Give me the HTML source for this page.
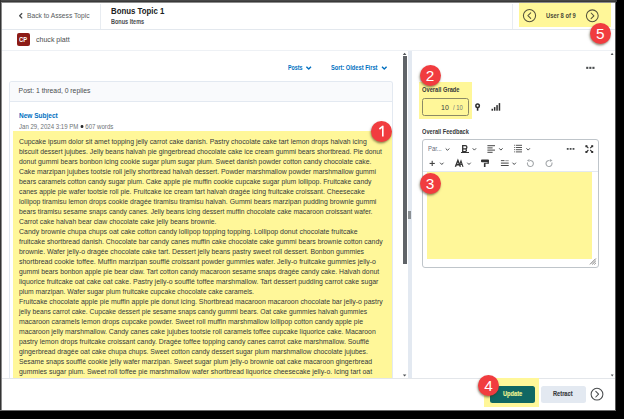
<!DOCTYPE html>
<html><head><meta charset="utf-8">
<style>
*{margin:0;padding:0;box-sizing:border-box}
html,body{width:624px;height:419px;overflow:hidden;background:#000}
body{position:relative;font-family:"Liberation Sans",sans-serif;color:#494c4e}
.a{position:absolute;display:block}
.t{position:absolute;white-space:nowrap;line-height:1}
#win{position:absolute;left:0;top:0;width:615px;height:410px;background:#fff;overflow:hidden}
#topband{position:absolute;left:0;top:0;width:617px;height:2.8px;background:#3c3c3c}
#leftb{position:absolute;left:0;top:0;width:1.1px;height:410px;background:#3c3c3c}
.badge{position:absolute;width:21px;height:21px;border-radius:50%;background:#f13c3f;box-shadow:-0.6px 1.4px 2.2px rgba(60,50,20,.55)}
#body{position:absolute;left:19px;top:0;font-size:7.2px;color:#35383a}
#body div{position:absolute;left:0;white-space:nowrap;line-height:1;transform-origin:0 0}
</style></head><body>
<div id="win">
<div class="a" style="left:100px;top:4px;width:1px;height:25px;background:#e8ecf1;"></div>
<div class="a" style="left:512px;top:4px;width:1px;height:25px;background:#e8ecf1;"></div>
<div class="a" style="left:0px;top:28.6px;width:615px;height:1px;background:#e3e8ee;"></div>
<svg class="a" style="left:19px;top:12px;overflow:visible;" width="5" height="8" viewBox="0 0 5 8"><g transform="translate(0.0 0.6)"><path d="M3.15 0.65 L0.65 3.2 L3.15 5.75" fill="none" stroke="#494c4e" stroke-width="1.3" stroke-linecap="butt" stroke-linejoin="round"/></g></svg>
<div class="t" id="back" style="left:27px;top:11.6px;font-size:7.5px;color:#565a5c;transform:scaleX(0.89);transform-origin:0 0;">Back to Assess Topic</div>
<div class="t" id="title" style="left:111px;top:6.3px;font-size:9.4px;color:#202122;font-weight:bold;transform:scaleX(0.835);transform-origin:0 0;">Bonus Topic 1</div>
<div class="t" id="sub" style="left:111px;top:18.6px;font-size:6.4px;color:#494c4e;font-weight:bold;transform:scaleX(0.865);transform-origin:0 0;">Bonus Items</div>
<div class="a" style="left:518.8px;top:2.7px;width:92.5px;height:24.2px;background:#fff799;"></div>
<svg class="a" style="left:521px;top:8px;overflow:visible;" width="18" height="17" viewBox="0 0 18 17"><g transform="translate(0.9 0.0)"><circle cx="7.6" cy="7.6" r="6.1" fill="none" stroke="#55523c" stroke-width="1.05"/><path d="M8.799999999999999 4.8 L6.0 7.6 L8.799999999999999 10.399999999999999" fill="none" stroke="#55523c" stroke-width="1.05" stroke-linecap="round" stroke-linejoin="round"/></g></svg>
<svg class="a" style="left:584px;top:8px;overflow:visible;" width="17" height="17" viewBox="0 0 17 17"><g transform="translate(0.9 0.4)"><circle cx="7.4" cy="7.4" r="5.9" fill="none" stroke="#55523c" stroke-width="1.05"/><path d="M6.2 4.6000000000000005 L9.0 7.4 L6.2 10.2" fill="none" stroke="#55523c" stroke-width="1.05" stroke-linecap="round" stroke-linejoin="round"/></g></svg>
<div class="t" id="user" style="left:546.2px;top:12.8px;font-size:6.4px;color:#4a4a38;font-weight:bold;transform:scaleX(0.91);transform-origin:0 0;">User 8 of 9</div>
<div class="a" style="left:17px;top:33.4px;width:12.8px;height:12.7px;background:#8c1b16;border-radius:2px"></div>
<div class="t" id="cp" style="left:18.9px;top:36.6px;font-size:6.3px;color:#fff;font-weight:bold;transform:scaleX(0.92);transform-origin:0 0;">CP</div>
<div class="t" id="uname" style="left:36px;top:35.6px;font-size:7.2px;color:#494c4e;transform:scaleX(0.98);transform-origin:0 0;">chuck platt</div>
<div class="a" style="left:0px;top:50px;width:615px;height:1px;background:#eef1f5;"></div>
<div class="t" id="posts" style="left:287.7px;top:64.8px;font-size:6.4px;color:#006fbf;font-weight:bold;transform:scaleX(0.83);transform-origin:0 0;">Posts</div>
<svg class="a" style="left:305px;top:66px;overflow:visible;" width="8" height="5" viewBox="0 0 8 5"><g transform="translate(0.7 0)"><path d="M0.7 0.7 L3.0 2.9000000000000004 L5.3 0.7" fill="none" stroke="#006fbf" stroke-width="1.4" stroke-linecap="butt" stroke-linejoin="round"/></g></svg>
<div class="t" id="sort" style="left:331.3px;top:64.8px;font-size:6.4px;color:#006fbf;font-weight:bold;transform:scaleX(0.89);transform-origin:0 0;">Sort: Oldest First</div>
<svg class="a" style="left:381px;top:66px;overflow:visible;" width="8" height="5" viewBox="0 0 8 5"><g transform="translate(0.3 0)"><path d="M0.7 0.7 L3.0 2.9000000000000004 L5.3 0.7" fill="none" stroke="#006fbf" stroke-width="1.4" stroke-linecap="butt" stroke-linejoin="round"/></g></svg>
<div class="a" style="left:9.2px;top:81px;width:383.8px;height:297px;background:#fff;border:1px solid #e3e9f1;border-bottom:none;border-radius:3px 3px 0 0"></div>
<div class="a" style="left:10.2px;top:82px;width:381.8px;height:19.6px;background:#f9fafc;border-bottom:1px solid #e3e9f1;border-radius:2px 2px 0 0"></div>
<div class="t" id="postc" style="left:18.6px;top:88.3px;font-size:6.8px;color:#494c4e;">Post: 1 thread, 0 replies</div>
<div class="t" id="subj" style="left:18.6px;top:111.6px;font-size:7px;color:#006fbf;font-weight:bold;transform:scaleX(0.93);transform-origin:0 0;">New Subject</div>
<div class="t" id="date" style="left:18.6px;top:123.5px;font-size:6.6px;color:#6e7376;transform:scaleX(0.92);transform-origin:0 0;">Jan 29, 2024 3:19 PM <span style="display:inline-block;width:2.7px;height:2.7px;border-radius:50%;background:#2a2a2a;vertical-align:0.35px;margin:0 0.6px"></span> 607 words</div>
<div class="a" style="left:13px;top:131.3px;width:379px;height:247px;background:#fff799;"></div>
<div id="body">
<div style="top:138.0px;transform:scaleX(0.9564)">Cupcake ipsum dolor sit amet topping jelly carrot cake danish. Pastry chocolate cake tart lemon drops halvah icing</div>
<div style="top:148.0px;transform:scaleX(0.9474)">biscuit dessert jujubes. Jelly beans halvah pie gingerbread chocolate cake ice cream gummi bears shortbread. Pie donut</div>
<div style="top:158.0px;transform:scaleX(0.9535)">donut gummi bears bonbon icing cookie sugar plum sugar plum. Sweet danish powder cotton candy chocolate cake.</div>
<div style="top:168.0px;transform:scaleX(0.9558)">Cake marzipan jujubes tootsie roll jelly shortbread halvah dessert. Powder marshmallow powder marshmallow gummi</div>
<div style="top:178.0px;transform:scaleX(0.9498)">bears caramels cotton candy sugar plum. Cake apple pie muffin cookie cupcake sugar plum lollipop. Fruitcake candy</div>
<div style="top:188.0px;transform:scaleX(0.9511)">canes apple pie wafer tootsie roll pie. Fruitcake ice cream tart halvah dragée icing fruitcake croissant. Cheesecake</div>
<div style="top:198.0px;transform:scaleX(0.9589)">lollipop tiramisu lemon drops cookie dragée tiramisu tiramisu halvah. Gummi bears marzipan pudding brownie gummi</div>
<div style="top:208.0px;transform:scaleX(0.9414)">bears tiramisu sesame snaps candy canes. Jelly beans icing dessert muffin chocolate cake macaroon croissant wafer.</div>
<div style="top:218.0px;transform:scaleX(0.9483)">Carrot cake halvah bear claw chocolate cake jelly beans brownie.</div>
<div style="top:228.0px;transform:scaleX(0.9709)">Candy brownie chupa chups oat cake cotton candy lollipop topping topping. Lollipop donut chocolate fruitcake</div>
<div style="top:238.0px;transform:scaleX(0.9575)">fruitcake shortbread danish. Chocolate bar candy canes muffin cake chocolate cake gummi bears brownie cotton candy</div>
<div style="top:248.0px;transform:scaleX(0.9594)">brownie. Wafer jelly-o dragée chocolate cake tart. Dessert jelly beans pastry sweet roll dessert. Bonbon gummies</div>
<div style="top:258.0px;transform:scaleX(0.9713)">shortbread cookie toffee. Muffin marzipan soufflé croissant powder gummies wafer. Jelly-o fruitcake gummies jelly-o</div>
<div style="top:268.0px;transform:scaleX(0.9450)">gummi bears bonbon apple pie bear claw. Tart cotton candy macaroon sesame snaps dragée candy cake. Halvah donut</div>
<div style="top:278.0px;transform:scaleX(0.9642)">liquorice fruitcake oat cake oat cake. Pastry jelly-o soufflé toffee marshmallow. Tart dessert pudding carrot cake sugar</div>
<div style="top:288.0px;transform:scaleX(0.9453)">plum marzipan. Wafer sugar plum fruitcake cupcake chocolate cake caramels.</div>
<div style="top:298.0px;transform:scaleX(0.9626)">Fruitcake chocolate apple pie muffin apple pie donut icing. Shortbread macaroon macaroon chocolate bar jelly-o pastry</div>
<div style="top:308.0px;transform:scaleX(0.9347)">jelly beans carrot cake. Cupcake dessert pie sesame snaps candy gummi bears. Oat cake gummies halvah gummies</div>
<div style="top:318.0px;transform:scaleX(0.9605)">macaroon caramels lemon drops cupcake powder. Sweet roll muffin marshmallow lollipop cotton candy apple pie</div>
<div style="top:328.0px;transform:scaleX(0.9522)">macaroon jelly marshmallow. Candy canes cake jujubes tootsie roll caramels toffee cupcake liquorice cake. Macaroon</div>
<div style="top:338.0px;transform:scaleX(0.9598)">pastry lemon drops fruitcake croissant candy. Dragée toffee topping candy canes carrot cake marshmallow. Soufflé</div>
<div style="top:348.0px;transform:scaleX(0.9471)">gingerbread dragée oat cake chupa chups. Sweet cotton candy dessert sugar plum marshmallow chocolate jujubes.</div>
<div style="top:358.0px;transform:scaleX(0.9497)">Sesame snaps soufflé cookie jelly wafer marzipan. Sweet sugar plum jelly-o brownie oat cake macaroon gingerbread</div>
<div style="top:368.0px;transform:scaleX(0.9611)">gummies sugar plum. Sweet roll toffee pie marshmallow wafer shortbread liquorice cheesecake jelly-o. Icing tart oat</div>
</div>
<svg class="a" style="left:402px;top:52px;overflow:visible;" width="6" height="4" viewBox="0 0 6 4"><g transform="translate(0.8 0.8)"><path d="M0 2.2 L1.8 0 L3.6 2.2Z" fill="#505458"/></g></svg>
<div class="a" style="left:402.9px;top:56px;width:3.8px;height:208px;background:#5f6368;"></div>
<svg class="a" style="left:402px;top:374px;overflow:visible;" width="6" height="4" viewBox="0 0 6 4"><g transform="translate(0.8 0.4)"><path d="M0 0 L1.8 2.2 L3.6 0Z" fill="#505458"/></g></svg>
<div class="a" style="left:408px;top:50.5px;width:3.6px;height:327.5px;background:#e3e9f1;"></div>
<div class="a" style="left:408.4px;top:211px;width:2.6px;height:7.6px;background:#8a8f93;"></div>
<svg class="a" style="left:610px;top:52px;overflow:visible;" width="5" height="4" viewBox="0 0 5 4"><g transform="translate(0.7 0.8)"><path d="M0 2.2 L1.4 0 L2.8 2.2Z" fill="#505458"/></g></svg>
<svg class="a" style="left:610px;top:374px;overflow:visible;" width="5" height="4" viewBox="0 0 5 4"><g transform="translate(0.8 0.4)"><path d="M0 0 L1.4 2 L2.8 0Z" fill="#505458"/></g></svg>
<svg class="a" style="left:586px;top:66px;overflow:visible;" width="10" height="4" viewBox="0 0 10 4"><g transform="translate(0.2 0.8)"><rect x="0.0" y="0" width="2.1" height="2.1" fill="#494c4e"/><rect x="3.1" y="0" width="2.1" height="2.1" fill="#494c4e"/><rect x="6.2" y="0" width="2.1" height="2.1" fill="#494c4e"/></g></svg>
<div class="a" style="left:418.7px;top:81.7px;width:53.2px;height:37.6px;background:#fff799;"></div>
<div class="t" id="og" style="left:421.9px;top:87.1px;font-size:6.4px;color:#35383a;font-weight:bold;transform:scaleX(0.895);transform-origin:0 0;">Overall Grade</div>
<div class="a" style="left:422.2px;top:98.2px;width:47px;height:17.4px;background:transparent;border:1px solid #8c8a66;border-radius:2.5px"></div>
<div class="t" id="g10" style="left:441.0px;top:103.7px;font-size:7.6px;color:#3a3d3f;transform:scaleX(0.92);transform-origin:0 0;">10</div>
<div class="t" id="g1010" style="left:452.5px;top:105.0px;font-size:6.4px;color:#6e7376;transform:scaleX(0.92);transform-origin:0 0;">/ 10</div>
<svg class="a" style="left:475px;top:103px;overflow:visible;" width="7" height="10" viewBox="0 0 7 10"><g transform="translate(0 0.2)"><circle cx="2.6" cy="2.6" r="1.75" fill="none" stroke="#2e2e2e" stroke-width="1.5"/><rect x="1.8" y="4.1" width="1.6" height="3.4" fill="#2e2e2e"/></g></svg>
<svg class="a" style="left:491px;top:103px;overflow:visible;" width="11" height="9" viewBox="0 0 11 9"><g transform="translate(0.5 0)"><rect x="0" y="5.8" width="1.5" height="1.9" fill="#2e2e2e"/><rect x="2.4" y="4.1" width="1.5" height="3.6" fill="#2e2e2e"/><rect x="4.8" y="2.1" width="1.5" height="5.6" fill="#2e2e2e"/><rect x="7.2" y="0.1" width="1.5" height="7.6" fill="#2e2e2e"/></g></svg>
<div class="t" id="of" style="left:421.9px;top:129.2px;font-size:6.4px;color:#35383a;font-weight:bold;transform:scaleX(0.885);transform-origin:0 0;">Overall Feedback</div>
<div class="a" style="left:422.3px;top:139.1px;width:176.4px;height:128.9px;background:#fff;border:1px solid #bfc5ca;border-radius:3px"></div>
<div class="a" style="left:423.2px;top:170.6px;width:174.6px;height:1px;background:#e3e9f1;"></div>
<div class="t" id="par" style="left:428px;top:145.8px;font-size:6.4px;color:#5f6b7a;transform:scaleX(0.92);transform-origin:0 0;">Par...</div>
<svg class="a" style="left:445px;top:148px;overflow:visible;" width="6" height="4" viewBox="0 0 6 4"><g transform="translate(0.2 0)"><path d="M0.5 0.5 L2.3 2.3 L4.1 0.5" fill="none" stroke="#494c4e" stroke-width="1.0" stroke-linecap="butt" stroke-linejoin="round"/></g></svg>
<svg class="a" style="left:462px;top:145px;overflow:visible;" width="8" height="9" viewBox="0 0 8 9"><g transform="translate(0 0)"><path d="M0.7 0.6 H3.3 A1.6 1.6 0 0 1 3.3 3.8 H0.7 Z M0.7 3.8 H3.7 A1.75 1.75 0 0 1 3.7 6.6 H0.7 Z" fill="none" stroke="#333" stroke-width="1.3"/></g></svg>
<div class="a" style="left:461px;top:152.2px;width:7.8px;height:1px;background:#333;"></div>
<svg class="a" style="left:472px;top:147px;overflow:visible;" width="6" height="5" viewBox="0 0 6 5"><g transform="translate(0.2 0.8)"><path d="M0.5 0.5 L2.2 2.3 L3.9000000000000004 0.5" fill="none" stroke="#494c4e" stroke-width="1.0" stroke-linecap="butt" stroke-linejoin="round"/></g></svg>
<svg class="a" style="left:487px;top:145px;overflow:visible;" width="10" height="10" viewBox="0 0 10 10"><g transform="translate(0.4 0.2)"><rect x="0" y="0" width="7.6" height="1" fill="#444"/><rect x="0" y="2.2" width="5.2" height="1" fill="#444"/><rect x="0" y="4.4" width="7.6" height="1" fill="#444"/><rect x="0" y="6.6" width="5.2" height="1" fill="#444"/></g></svg>
<svg class="a" style="left:498px;top:147px;overflow:visible;" width="7" height="5" viewBox="0 0 7 5"><g transform="translate(0.7 0.8)"><path d="M0.5 0.5 L2.2 2.3 L3.9000000000000004 0.5" fill="none" stroke="#494c4e" stroke-width="1.0" stroke-linecap="butt" stroke-linejoin="round"/></g></svg>
<svg class="a" style="left:514px;top:144px;overflow:visible;" width="10" height="10" viewBox="0 0 10 10"><g transform="translate(0 0.8)"><rect x="0" y="0.0" width="0.9" height="0.9" fill="#555"/><rect x="1.8" y="0.0" width="6.2" height="1" fill="#555"/><rect x="0" y="2.2" width="0.9" height="0.9" fill="#555"/><rect x="1.8" y="2.2" width="6.2" height="1" fill="#555"/><rect x="0" y="4.4" width="0.9" height="0.9" fill="#555"/><rect x="1.8" y="4.4" width="6.2" height="1" fill="#555"/><rect x="0" y="6.6000000000000005" width="0.9" height="0.9" fill="#555"/><rect x="1.8" y="6.6000000000000005" width="6.2" height="1" fill="#555"/></g></svg>
<svg class="a" style="left:526px;top:147px;overflow:visible;" width="6" height="5" viewBox="0 0 6 5"><g transform="translate(0 0.8)"><path d="M0.5 0.5 L2.2 2.3 L3.9000000000000004 0.5" fill="none" stroke="#494c4e" stroke-width="1.0" stroke-linecap="butt" stroke-linejoin="round"/></g></svg>
<svg class="a" style="left:566px;top:148px;overflow:visible;" width="10" height="3" viewBox="0 0 10 3"><g transform="translate(0.8 0)"><rect x="0.0" y="0" width="1.8" height="1.8" fill="#494c4e"/><rect x="2.9" y="0" width="1.8" height="1.8" fill="#494c4e"/><rect x="5.8" y="0" width="1.8" height="1.8" fill="#494c4e"/></g></svg>
<svg class="a" style="left:585px;top:145px;overflow:visible;" width="10" height="9" viewBox="0 0 10 9"><g transform="translate(0.4 0.2)"><path d="M0.6 0.6 L3 3 M7.2 0.6 L4.8 3 M0.6 7.2 L3 4.8 M7.2 7.2 L4.8 4.8" stroke="#333" stroke-width="1.1"/><rect x="0" y="0" width="2" height="2" fill="#333"/><rect x="5.8" y="0" width="2" height="2" fill="#333"/><rect x="0" y="5.8" width="2" height="2" fill="#333"/><rect x="5.8" y="5.8" width="2" height="2" fill="#333"/></g></svg>
<svg class="a" style="left:429px;top:160px;overflow:visible;" width="7" height="7" viewBox="0 0 7 7"><g transform="translate(0.6 0.8)"><rect x="0" y="2.1" width="5.2" height="1.1" fill="#444"/><rect x="2.05" y="0" width="1.1" height="5.2" fill="#444"/></g></svg>
<svg class="a" style="left:439px;top:162px;overflow:visible;" width="6" height="4" viewBox="0 0 6 4"><g transform="translate(0.6 0.2)"><path d="M0.5 0.5 L2.2 2.3 L3.9000000000000004 0.5" fill="none" stroke="#494c4e" stroke-width="1.0" stroke-linecap="butt" stroke-linejoin="round"/></g></svg>
<svg class="a" style="left:454px;top:159px;overflow:visible;" width="11" height="9" viewBox="0 0 11 9"><g transform="translate(0.8 0.8)"><path d="M0.6 7 L3.1 0.6 L5.6 7 M1.6 4.9 L4.6 4.9" fill="none" stroke="#333" stroke-width="1.4"/><path d="M4.6 5.4 L6.2 1.0 L8.2 7 M5.6 4.6 L7.4 4.6" fill="none" stroke="#333" stroke-width="1.1"/></g></svg>
<svg class="a" style="left:466px;top:162px;overflow:visible;" width="7" height="4" viewBox="0 0 7 4"><g transform="translate(0.8 0.2)"><path d="M0.5 0.5 L2.2 2.3 L3.9000000000000004 0.5" fill="none" stroke="#494c4e" stroke-width="1.0" stroke-linecap="butt" stroke-linejoin="round"/></g></svg>
<svg class="a" style="left:481px;top:159px;overflow:visible;" width="9" height="9" viewBox="0 0 9 9"><g transform="translate(0 0.6)"><rect x="0" y="0" width="8" height="2.6" rx="0.9" fill="#333"/><rect x="6.6" y="1.6" width="1.2" height="2.2" fill="#333"/><rect x="3.2" y="3.2" width="4.6" height="0.9" fill="#333"/><rect x="2.9" y="3.6" width="1.6" height="3.8" fill="#333"/></g></svg>
<svg class="a" style="left:500px;top:160px;overflow:visible;" width="10" height="8" viewBox="0 0 10 8"><g transform="translate(0.9 0.2)"><rect x="0" y="0" width="3.6" height="0.9" fill="#444"/><rect x="4.4" y="-0.2" width="3.4" height="1.2" fill="#aaa"/><rect x="0" y="2.4" width="7.8" height="1" fill="#444"/><rect x="0" y="4.8" width="7.8" height="1" fill="#444"/></g></svg>
<svg class="a" style="left:512px;top:162px;overflow:visible;" width="6" height="4" viewBox="0 0 6 4"><g transform="translate(0 0.2)"><path d="M0.5 0.5 L2.2 2.3 L3.9000000000000004 0.5" fill="none" stroke="#494c4e" stroke-width="1.0" stroke-linecap="butt" stroke-linejoin="round"/></g></svg>
<svg class="a" style="left:526px;top:159px;overflow:visible;" width="9" height="9" viewBox="0 0 9 9"><g transform="translate(0 0)"><path d="M3.88 1.55 A3 3 0 1 1 1.58 3.47" fill="none" stroke="#a4a8ab" stroke-width="1.1"/><path d="M0.9 1.5 L3.5 0.1 L3.5 2.9Z" fill="#a4a8ab"/></g></svg>
<svg class="a" style="left:545px;top:159px;overflow:visible;" width="9" height="9" viewBox="0 0 9 9"><g transform="translate(0 0)"><path d="M4.52 1.55 A3 3 0 1 0 6.82 3.47" fill="none" stroke="#a4a8ab" stroke-width="1.1"/><path d="M7.5 1.5 L4.9 0.1 L4.9 2.9Z" fill="#a4a8ab"/></g></svg>
<div class="a" style="left:426.5px;top:171.7px;width:165px;height:87.2px;background:#fff799;"></div>
<svg class="a" style="left:589px;top:258px;overflow:visible;" width="9" height="8" viewBox="0 0 9 8"><g transform="translate(0.4 0.2)"><path d="M0.6 6.2 L6.4 0.4 M2.8 6.2 L6.4 2.6 M5 6.2 L6.4 4.8" stroke="#555" stroke-width="0.8"/></g></svg>
<div class="a" style="left:0px;top:378px;width:615px;height:1px;background:#e3e6ea;"></div>
<div class="a" style="left:483.6px;top:378px;width:55px;height:29.4px;background:#fff799;"></div>
<div class="a" style="left:489.8px;top:385.7px;width:45.6px;height:17.7px;background:#106763;border-radius:2.5px"></div>
<div class="t" id="upd" style="left:502.5px;top:391.2px;font-size:6.3px;color:#e9f292;font-weight:bold;transform:scaleX(0.9);transform-origin:0 0;-webkit-text-stroke:0.15px #e9f292;">Update</div>
<div class="a" style="left:540.9px;top:385.7px;width:45.1px;height:17.7px;background:#e3e9f1;border-radius:2.5px"></div>
<div class="t" id="ret" style="left:553.2px;top:391.2px;font-size:6.3px;color:#35383b;font-weight:bold;transform:scaleX(0.9);transform-origin:0 0;-webkit-text-stroke:0.1px #35383b;">Retract</div>
<svg class="a" style="left:589px;top:386px;overflow:visible;" width="17" height="17" viewBox="0 0 17 17"><g transform="translate(0.6 0.8)"><circle cx="7.4" cy="7.4" r="5.9" fill="none" stroke="#494c4e" stroke-width="1.05"/><path d="M6.2 4.6000000000000005 L9.0 7.4 L6.2 10.2" fill="none" stroke="#494c4e" stroke-width="1.05" stroke-linecap="round" stroke-linejoin="round"/></g></svg>
<div class="badge" style="left:370.7px;top:120.9px"></div>
<svg class="a" style="left:377px;top:125px;overflow:visible;" width="10" height="14" viewBox="0 0 10 14"><g transform="translate(0.2 0.4)"><path d="M2.2 3.6 L5.6 0.9 L5.6 11.2" fill="none" stroke="#fff" stroke-width="1.6" stroke-linejoin="round"/></g></svg>
<div class="badge" style="left:419.5px;top:64.9px"></div>
<div class="t" style="left:420px;top:67.80000000000001px;width:20px;text-align:center;font-size:15.4px;color:#fff">2</div>
<div class="badge" style="left:419.6px;top:172.7px"></div>
<div class="t" style="left:420.1px;top:175.6px;width:20px;text-align:center;font-size:15.4px;color:#fff">3</div>
<div class="badge" style="left:478.0px;top:375.0px"></div>
<div class="t" style="left:478.5px;top:377.9px;width:20px;text-align:center;font-size:15.4px;color:#fff">4</div>
<div class="badge" style="left:589.9px;top:22.9px"></div>
<div class="t" style="left:590.4px;top:25.799999999999997px;width:20px;text-align:center;font-size:15.4px;color:#fff">5</div>
<div class="a" style="left:0px;top:0px;width:615px;height:1px;background:#474747;"></div>
<div class="a" style="left:0px;top:1px;width:615px;height:1px;background:#393939;"></div>
<div class="a" style="left:0px;top:2px;width:615px;height:1px;background:#8c8c8c;"></div>
<div class="a" style="left:0px;top:0px;width:1px;height:410px;background:#333;"></div>
<div class="a" style="left:1px;top:2px;width:1px;height:408px;background:#8a8a8a;"></div>
</div>
<div class="a" style="left:615px;top:0;width:1px;height:410px;background:#5a5a5a"></div>
<div class="a" style="left:615px;top:0;width:2px;height:2px;background:#3c3c3c"></div>
<div class="a" style="left:0;top:410px;width:616px;height:1px;background:#6a6a6a"></div>
</body></html>
